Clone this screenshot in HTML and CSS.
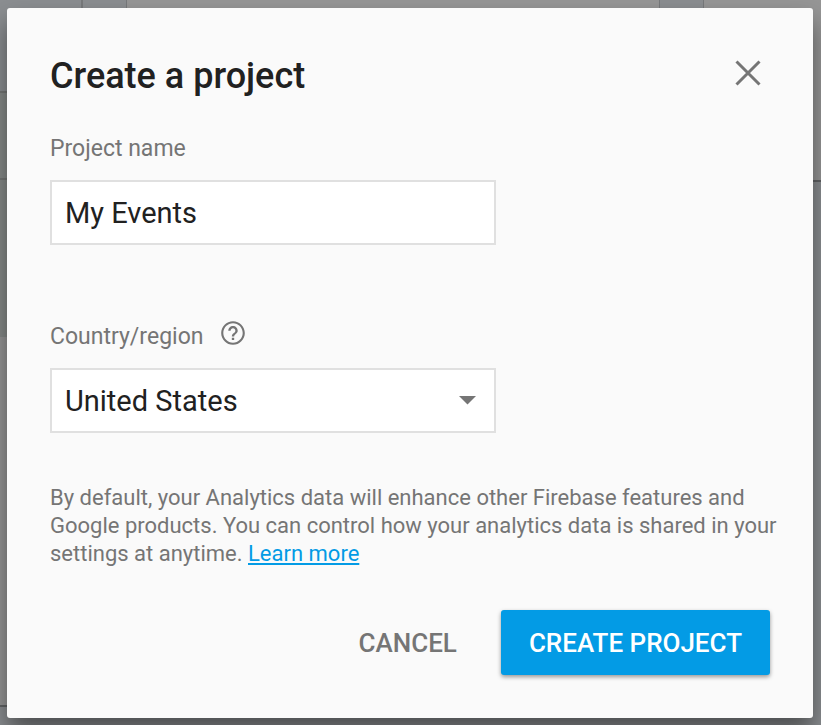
FILE: index.html
```html
<!DOCTYPE html>
<html lang="en">
<head>
<meta charset="utf-8">
<title>Create a project</title>
<link rel="stylesheet" href="styles.css">
</head>
<body>
<div class="backdrop" aria-hidden="true">
  <div class="sidebar">
    <span class="nav-item nav-first"></span>
    <span class="nav-item"></span>
    <span class="nav-rest"></span>
    <span class="panel"></span>
  </div>
  <div class="project-card"></div>
  <div class="project-card last-card"></div>
</div>
<form class="dialog" role="dialog" aria-labelledby="title">
  <header class="header">
    <h1 id="title">Create a project</h1>
    <button class="close" type="button" aria-label="Close">
      <svg width="26" height="26" viewBox="0 0 26 26"><path d="M1.500 1.500L24.500 24.500M24.500 1.500L1.500 24.500" fill="none" stroke="currentColor" stroke-width="3"/></svg>
    </button>
  </header>
  <div class="field">
    <label for="name">Project name</label>
    <input id="name" class="control" type="text" value="My Events">
  </div>
  <div class="field">
    <div class="label-row">
      <label for="country">Country/region</label>
      <svg class="help" width="26" height="26" viewBox="1 1 22 22"><path fill="currentColor" d="M11 18h2v-2h-2v2zm1-16C6.480 2 2 6.480 2 12s4.480 10 10 10 10-4.480 10-10S17.520 2 12 2zm0 18.200c-4.500 0-8.200-3.700-8.200-8.200s3.700-8.200 8.200-8.200 8.200 3.700 8.200 8.200-3.700 8.200-8.200 8.200zm0-14.200c-2.210 0-4 1.790-4 4h2c0-1.100.9-2 2-2s2 .9 2 2c0 2-3 1.750-3 5h2c0-2.250 3-2.500 3-5 0-2.210-1.790-4-4-4z"/></svg>
    </div>
    <div class="select-wrap">
      <select id="country" class="control"><option>United States</option></select>
      <svg class="arrow" width="17" height="9" viewBox="0 0 17 9"><path d="M0 0h17L8.500 8.500z" fill="currentColor"/></svg>
    </div>
  </div>
  <p class="note">By default, your Analytics data will enhance other Firebase features and Google products. You can control how your analytics data is shared in your settings at anytime. <a href="#">Learn more</a></p>
  <footer class="actions">
    <button class="button" type="button">CANCEL</button>
    <button class="button primary" type="submit">CREATE PROJECT</button>
  </footer>
</form>
</body>
</html>
```
FILE: styles.css
```css
* { box-sizing: border-box; }
body {
  margin: 0;
  min-height: 100vh;
  padding: 8px 8px 7px 7px;
  background: #8b8e91;
  font-family: Roboto, sans-serif;
  color: #212121;
}

/* Dimmed page behind the dialog */
.backdrop {
  position: absolute;
  inset: 0;
  display: grid;
  grid-template-columns: 83px 1fr 118px;
  column-gap: 43px;
  overflow: hidden;
}
.sidebar {
  display: flex;
  flex-direction: column;
  padding-bottom: 18px;
  background: linear-gradient(#77797b, #77797b) right top / 2px 93px no-repeat;
}
.nav-item { height: 87px; background: #868a88; border-bottom: 2px solid #747775; }
.nav-first { height: 93px; margin-right: 2px; background: #8b8e91; }
.nav-rest { height: 157px; background: #868a88; }
.panel { flex: 1; background: #969696; border-bottom: 2px solid #626466; }
.project-card {
  height: 182px;
  background: #969696;
  border: 1px solid #77797b;
  border-top: 0;
  border-bottom: 2px solid #626466;
}
.last-card { border-right: 0; }

.dialog {
  position: relative;
  min-height: calc(100vh - 15px);
  padding: 44px 43px 43px;
  background: #fafafa;
  border-radius: 3px;
  box-shadow: 0 14px 24px rgba(0, 0, 0, 0.45);
}
.header { display: flex; justify-content: space-between; align-items: flex-start; height: 80px; }
h1 { margin: 0; font-size: 36px; line-height: 48px; font-weight: 500; }
button { font-family: inherit; border: 0; background: none; }
.close { display: flex; padding: 8px 9px; color: #757575; }
label { display: block; font-size: 23px; line-height: 34px; color: #757575; }
.field { margin-bottom: 75px; }
.control {
  display: block;
  width: 100%;
  max-width: 446px;
  height: 65px;
  margin-top: 14px;
  padding: 0 13px;
  border: 2px solid #e0e0e0;
  border-radius: 0;
  background: #fff;
  color: #212121;
  font: 29px Roboto, sans-serif;
}
select.control { appearance: none; }
.label-row { display: flex; align-items: flex-start; gap: 17px; }
.help, .arrow { color: #757575; }
.select-wrap { position: relative; max-width: 446px; }
.arrow { position: absolute; right: 20px; top: 28px; pointer-events: none; }
.note { margin: -24px -10px 0 0; font-size: 22px; line-height: 28px; color: #757575; }
a { color: #039be5; }
.actions { display: flex; justify-content: flex-end; gap: 16px; margin-top: 42px; }
.button { height: 65px; padding: 0 28px; font-size: 26px; font-weight: 500; color: #757575; }
.primary {
  color: #fff;
  background: #039be5;
  border-radius: 3px;
  box-shadow: 0 2px 4px rgba(0, 0, 0, 0.4);
}
```
